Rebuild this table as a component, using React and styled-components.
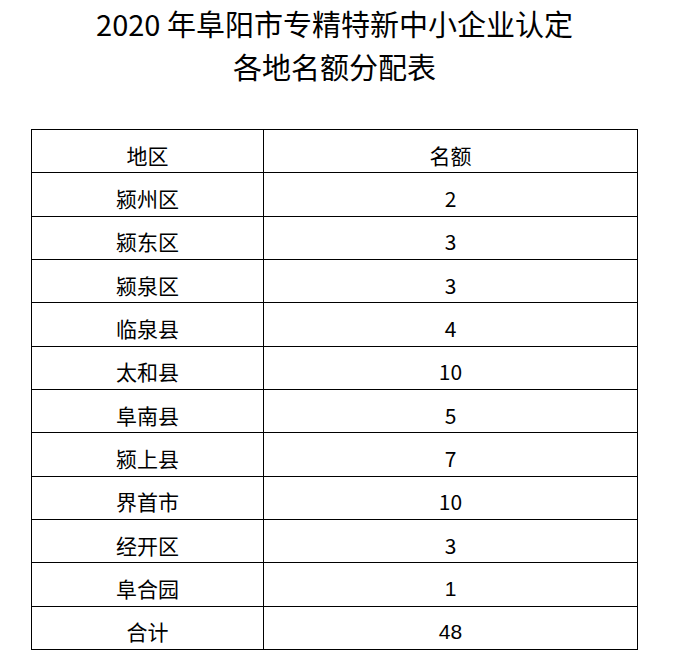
import React from "react";
import styled, { createGlobalStyle } from "styled-components";

const GlobalStyle = createGlobalStyle`
  body {
    margin: 0;
    background: #fff;
    color: #000;
    font-family: "Noto Sans CJK SC", "Noto Sans", sans-serif;
  }
`;

const Page = styled.div`
  width: 607px;
  padding: 2px 0 20px 31px;
`;

const Title = styled.h1`
  margin: 0;
  font-size: 29px;
  font-weight: 400;
  line-height: 43px;
  text-align: center;
`;

const Grid = styled.div`
  margin-top: 41px;
  display: grid;
  grid-template-columns: 232px 1fr;
  grid-auto-rows: 43.33px;
  border-top: 1px solid #000;
  border-left: 1px solid #000;
`;

const Cell = styled.div`
  display: flex;
  align-items: center;
  justify-content: center;
  padding-top: 8px;
  box-sizing: border-box;
  border-right: 1px solid #000;
  border-bottom: 1px solid #000;
  font-size: 21px;
  line-height: 1;
  font-family: ${(p) =>
    p.$arial
      ? '"Liberation Sans", "Noto Sans CJK SC", sans-serif'
      : '"Noto Sans CJK SC", "Noto Sans", sans-serif'};
`;

const rows = [
  ["颍州区", "2"],
  ["颍东区", "3"],
  ["颍泉区", "3"],
  ["临泉县", "4"],
  ["太和县", "10"],
  ["阜南县", "5"],
  ["颍上县", "7"],
  ["界首市", "10"],
  ["经开区", "3"],
  ["阜合园", "1", true],
  ["合计", "48", true],
];

export default function App() {
  return (
    <>
      <GlobalStyle />
      <Page>
        <Title>
          2020 年阜阳市专精特新中小企业认定
          <br />
          各地名额分配表
        </Title>
        <Grid>
          <Cell>地区</Cell>
          <Cell>名额</Cell>
          {rows.map(([area, count, arial]) => (
            <React.Fragment key={area}>
              <Cell>{area}</Cell>
              <Cell $arial={arial}>{count}</Cell>
            </React.Fragment>
          ))}
        </Grid>
      </Page>
    </>
  );
}
